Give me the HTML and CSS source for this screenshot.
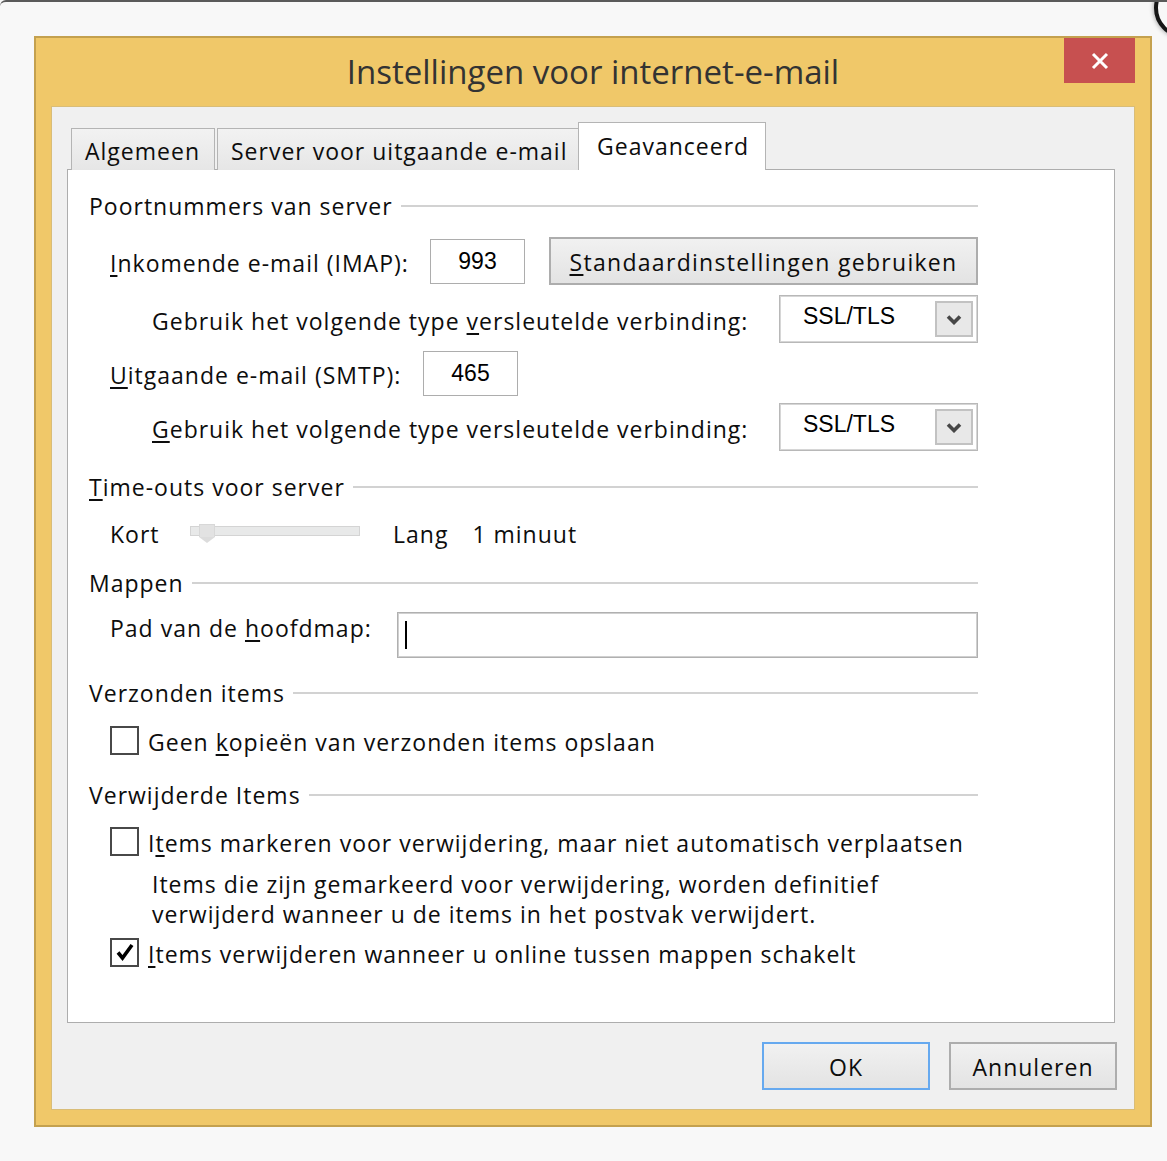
FILE: index.html
```html
<!DOCTYPE html>
<html lang="nl">
<head>
<meta charset="utf-8">
<title>Instellingen voor internet-e-mail</title>
<link rel="stylesheet" href="styles.css">
</head>
<body>
<div class="screen">
  <div class="corner-ring"></div>
  <div class="dialog">
    <div class="titlebar">
      <div class="title">Instellingen voor internet-e-mail</div>
      <div class="close">
        <svg width="20" height="20" viewBox="0 0 20 20"><path d="M3 3 L17 17 M17 3 L3 17" stroke="#fff" stroke-width="3" fill="none"/></svg>
      </div>
    </div>
    <div class="client">
      <div class="tabs">
        <div class="tab t1">Algemeen</div>
        <div class="tab t2">Server voor uitgaande e-mail</div>
        <div class="tab active">Geavanceerd</div>
      </div>
      <div class="panel">
        <div class="hdr r1"><span>Poortnummers van server</span><i></i></div>
        <div class="row r2 ind1">
          <span class="lbl w-imap"><u>I</u>nkomende e-mail (IMAP):</span>
          <div class="num n1">993</div>
          <div class="btn std"><u>S</u>tandaardinstellingen gebruiken</div>
        </div>
        <div class="row r3 ind2">
          <span class="lbl">Gebruik het volgende type <u>v</u>ersleutelde verbinding:</span>
          <div class="select"><span>SSL/TLS</span><div class="drop"><svg width="16" height="11" viewBox="0 0 16 11"><path d="M2 2.5 L8 8.5 L14 2.5" stroke="#474747" stroke-width="3.6" fill="none"/></svg></div></div>
        </div>
        <div class="row r4 ind1">
          <span class="lbl w-smtp"><u>U</u>itgaande e-mail (SMTP):</span>
          <div class="num n2">465</div>
        </div>
        <div class="row r5 ind2">
          <span class="lbl"><u>G</u>ebruik het volgende type versleutelde verbinding:</span>
          <div class="select"><span>SSL/TLS</span><div class="drop"><svg width="16" height="11" viewBox="0 0 16 11"><path d="M2 2.5 L8 8.5 L14 2.5" stroke="#474747" stroke-width="3.6" fill="none"/></svg></div></div>
        </div>
        <div class="hdr r6"><span><u>T</u>ime-outs voor server</span><i></i></div>
        <div class="row r7 ind1">
          <span class="lbl w-kort">Kort</span>
          <div class="slider"><div class="thumb"></div></div>
          <span class="lbl lang">Lang</span>
          <span class="lbl">1 minuut</span>
        </div>
        <div class="hdr r8"><span>Mappen</span><i></i></div>
        <div class="row r9 ind1">
          <span class="lbl w-pad">Pad van de <u>h</u>oofdmap:</span>
          <div class="path"><b class="caret"></b></div>
        </div>
        <div class="hdr r10"><span>Verzonden items</span><i></i></div>
        <div class="row r11 ind1">
          <div class="chk"></div>
          <span class="lbl">Geen <u>k</u>opieën van verzonden items opslaan</span>
        </div>
        <div class="hdr r12"><span>Verwijderde Items</span><i></i></div>
        <div class="row r13 ind1">
          <div class="chk"></div>
          <span class="lbl">I<u>t</u>ems markeren voor verwijdering, maar niet automatisch verplaatsen</span>
        </div>
        <div class="desc r14">Items die zijn gemarkeerd voor verwijdering, worden definitief<br>verwijderd wanneer u de items in het postvak verwijdert.</div>
        <div class="row r15 ind1">
          <div class="chk checked"><svg width="22" height="22" viewBox="0 0 22 22"><path d="M4 11.5 L8.5 17 L18 4" stroke="#000" stroke-width="3.6" fill="none"/></svg></div>
          <span class="lbl"><u>I</u>tems verwijderen wanneer u online tussen mappen schakelt</span>
        </div>
      </div>
      <div class="actions">
        <div class="btn ok">OK</div>
        <div class="btn cancel">Annuleren</div>
      </div>
    </div>
  </div>
</div>
</body>
</html>
```

FILE: styles.css
```css
html, body {
  margin: 0;
  padding: 0;
  background: #f8f8f8;
  overflow: hidden;
}
.screen {
  position: relative;
  width: 1167px;
  height: 1161px;
  overflow: hidden;
  box-sizing: border-box;
  border-top: 2px solid #5a5a5a;
  border-top-left-radius: 6px;
  padding-top: 34px;
  padding-left: 34px;
  font-family: "Open Sans", "Noto Sans", sans-serif;
  color: #0d0d0d;
}
.corner-ring {
  position: absolute;
  left: 1154px;
  top: -24px;
  width: 52px;
  height: 52px;
  border: 4px solid #161616;
  border-radius: 50%;
  box-shadow: 0 0 5px rgba(0,0,0,0.45);
  background: #f8f8f8;
}
.dialog {
  width: 1118px;
  height: 1091px;
  box-sizing: border-box;
  border: 2px solid #c4a14f;
  background: #f0c869;
  padding: 0 15px 15px 15px;
  display: flex;
  flex-direction: column;
}
.titlebar {
  height: 68px;
  display: grid;
  grid-template-columns: 1fr auto 1fr;
  flex-shrink: 0;
}
.title {
  grid-column: 2;
  font-size: 33px;
  color: #333;
  line-height: 68px;
}
.close {
  grid-column: 3;
  justify-self: end;
  width: 71px;
  height: 45px;
  background: #c75050;
  display: flex;
  align-items: center;
  justify-content: center;
}
.client {
  flex: 1;
  border: 1px solid #d9bd78;
  background: #f0f0f0;
  padding: 16px 19px 0 15px;
  display: flex;
  flex-direction: column;
}
.tabs {
  display: flex;
  align-items: flex-end;
  padding-left: 4px;
  height: 47px;
  position: relative;
  z-index: 2;
  margin-bottom: -1px;
}
.tab {
  box-sizing: border-box;
  height: 42px;
  border: 1px solid #b4b4b4;
  border-bottom: none;
  background: linear-gradient(#f2f2f2, #e6e6e6);
  font-size: 23px;
  letter-spacing: 1px;
  line-height: 44px;
  padding-left: 13px;
  white-space: nowrap;
}
.t1 { width: 144px; margin-right: 2px; }
.t2 { width: 362px; }
.tab.active {
  width: 188px;
  height: 48px;
  margin-left: -1px;
  background: #fff;
  padding-left: 18px;
  line-height: 46px;
}
.panel {
  height: 854px;
  box-sizing: border-box;
  border: 1px solid #adadad;
  background: #fff;
  padding: 20px 136px 0 21px;
  display: flex;
  flex-direction: column;
}
.hdr {
  display: flex;
  align-items: center;
  height: 30px;
  font-size: 23px;
  letter-spacing: 1px;
  white-space: nowrap;
}
.hdr span { padding-top: 1px; }
.hdr i {
  flex: 1;
  height: 2px;
  background: #d2d2d2;
  margin-left: 8px;
  margin-top: 1px;
}
.row {
  display: flex;
  align-items: center;
  font-size: 23px;
  letter-spacing: 1px;
  white-space: nowrap;
}
.row .lbl { padding-top: 3px; }
.ind1 { padding-left: 21px; }
.ind2 { padding-left: 63px; }
u { text-decoration-thickness: 2px; text-underline-offset: 3px; }

.r2 { margin-top: 16px; height: 50px; }
.r3 { margin-top: 9px; height: 48px; }
.r4 { margin-top: 7px; height: 46px; }
.r5 { margin-top: 7px; height: 48px; }
.r6 { margin-top: 20px; }
.r7 { margin-top: 16px; height: 30px; }
.r8 { margin-top: 20px; }
.r9 { margin-top: 15px; height: 46px; align-items: flex-start; }
.r9 .lbl { line-height: 32px; padding-top: 0; }
.r10 { margin-top: 19px; }
.r11 { margin-top: 18px; height: 30px; }
.r12 { margin-top: 24px; }
.r13 { margin-top: 17px; height: 30px; }
.r14 { margin-top: 14px; }
.r15 { margin-top: 8px; height: 30px; }

.w-imap { width: 320px; }
.w-smtp { width: 313px; }
.w-pad { width: 287px; }
.w-kort { width: 80px; }

.num {
  box-sizing: border-box;
  width: 95px;
  height: 45px;
  border: 1px solid #adadad;
  background: #fff;
  font-family: "Liberation Sans", Arial, sans-serif;
  font-size: 23px;
  letter-spacing: 0;
  display: flex;
  align-items: center;
  justify-content: center;
  color: #000;
}
.btn {
  box-sizing: border-box;
  border: 2px solid #adadad;
  background: linear-gradient(#f1f1f1, #e3e3e3);
  display: flex;
  align-items: center;
  justify-content: center;
  font-size: 23px;
  letter-spacing: 1px;
  white-space: nowrap;
  padding-top: 2px;
}
.std {
  margin-left: auto;
  width: 429px;
  height: 48px;
  letter-spacing: 1.3px;
}
.select {
  margin-left: auto;
  box-sizing: border-box;
  width: 199px;
  height: 48px;
  border: 2px solid #d6d6d6;
  outline: 1px solid #b8b8b8;
  outline-offset: -1px;
  background: #fff;
  display: flex;
  align-items: center;
  padding-left: 22px;
  padding-right: 3px;
  font-family: "Liberation Sans", Arial, sans-serif;
  font-size: 23px;
  letter-spacing: 0;
  color: #000;
}
.select span { flex: 1; margin-top: -6px; }
.drop {
  box-sizing: border-box;
  width: 38px;
  height: 36px;
  border: 2px solid #c2c2c2;
  background: #e8e8e8;
  display: flex;
  align-items: center;
  justify-content: center;
}
.slider {
  position: relative;
  box-sizing: border-box;
  width: 170px;
  height: 10px;
  border: 1px solid #d4d4d4;
  background: #e8e9e9;
  margin-right: 33px;
  margin-top: -2px;
}
.thumb {
  position: absolute;
  left: 8px;
  top: -3px;
  width: 14px;
  height: 12px;
  background: #e2e2e2;
  border: 1px solid #d8d8d8;
  border-bottom: none;
}
.thumb::after {
  content: "";
  position: absolute;
  left: -1px;
  top: 12px;
  border-left: 8px solid transparent;
  border-right: 8px solid transparent;
  border-top: 6px solid #dcdcdc;
}
.lang { margin-right: 24px; }
.path {
  box-sizing: border-box;
  width: 581px;
  margin-left: auto;
  height: 46px;
  border: 2px solid #d0d0d0;
  outline: 1px solid #b0b0b0;
  outline-offset: -1px;
  background: #fff;
  display: flex;
  align-items: center;
  padding-left: 6px;
}
.caret {
  width: 2px;
  height: 28px;
  background: #000;
}
.chk {
  box-sizing: border-box;
  width: 29px;
  height: 29px;
  border: 2px solid #484848;
  background: #fff;
  margin-right: 9px;
  display: flex;
  align-items: center;
  justify-content: center;
}
.desc {
  padding-left: 63px;
  font-size: 23px;
  letter-spacing: 1px;
  line-height: 29.5px;
  white-space: nowrap;
}
.actions {
  display: flex;
  justify-content: flex-end;
  margin-top: 19px;
  margin-right: -2px;
}
.ok {
  width: 168px;
  height: 48px;
  border-color: #66a9ef;
  margin-right: 19px;
}
.cancel {
  width: 168px;
  height: 48px;
}
```
